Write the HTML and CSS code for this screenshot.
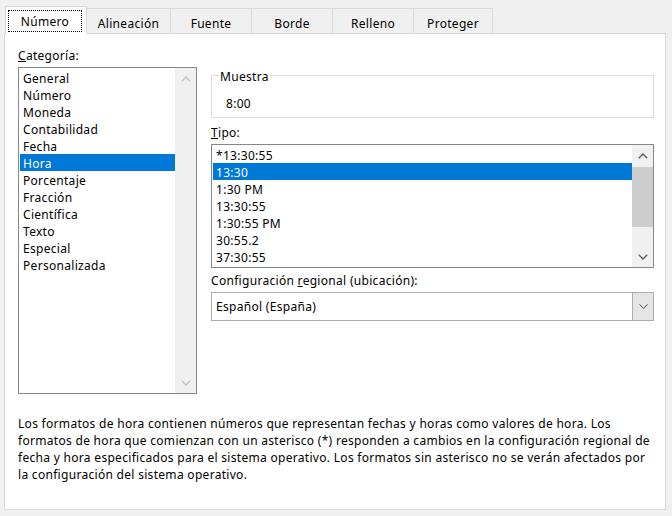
FILE: index.html
```html
<!DOCTYPE html>
<html lang="es">
<head>
<meta charset="utf-8">
<title>Formato de celdas</title>
<link rel="stylesheet" href="styles.css">
</head>
<body>
<div class="dialog">
  <div class="tabs">
    <div class="tab sel t-num"><span class="focus">Número</span></div>
    <div class="tab t-ali">Alineación</div>
    <div class="tab t-fue">Fuente</div>
    <div class="tab t-bor">Borde</div>
    <div class="tab t-rel">Relleno</div>
    <div class="tab t-pro">Proteger</div>
  </div>
  <div class="panel">
    <div class="main">
      <div class="left">
        <div class="label lbl-cat"><u>C</u>ategoría:</div>
        <div class="listbox cat">
          <div class="items">
            <div class="item">General</div>
            <div class="item">Número</div>
            <div class="item">Moneda</div>
            <div class="item">Contabilidad</div>
            <div class="item">Fecha</div>
            <div class="item selected">Hora</div>
            <div class="item">Porcentaje</div>
            <div class="item">Fracción</div>
            <div class="item">Científica</div>
            <div class="item">Texto</div>
            <div class="item">Especial</div>
            <div class="item">Personalizada</div>
          </div>
          <div class="vscroll disabled">
            <div class="sbtn"><svg width="10" height="6" viewBox="0 0 10 6"><path d="M0.8 5.2 L5 1 L9.2 5.2" fill="none" stroke="#c2c2c2" stroke-width="1.4"/></svg></div>
            <div class="track"></div>
            <div class="sbtn"><svg width="10" height="6" viewBox="0 0 10 6"><path d="M0.8 0.8 L5 5 L9.2 0.8" fill="none" stroke="#c2c2c2" stroke-width="1.4"/></svg></div>
          </div>
        </div>
      </div>
      <div class="right">
        <fieldset class="sample">
          <legend>Muestra</legend>
          <div class="sample-val">8:00</div>
        </fieldset>
        <div class="label lbl-tipo"><u>T</u>ipo:</div>
        <div class="listbox tipo">
          <div class="items">
            <div class="item">*13:30:55</div>
            <div class="item selected">13:30</div>
            <div class="item">1:30 PM</div>
            <div class="item">13:30:55</div>
            <div class="item">1:30:55 PM</div>
            <div class="item">30:55.2</div>
            <div class="item">37:30:55</div>
          </div>
          <div class="vscroll">
            <div class="sbtn"><svg width="10" height="6" viewBox="0 0 10 6"><path d="M0.8 5.2 L5 1 L9.2 5.2" fill="none" stroke="#606060" stroke-width="1.4"/></svg></div>
            <div class="thumb"></div>
            <div class="track"></div>
            <div class="sbtn"><svg width="10" height="6" viewBox="0 0 10 6"><path d="M0.8 0.8 L5 5 L9.2 0.8" fill="none" stroke="#606060" stroke-width="1.4"/></svg></div>
          </div>
        </div>
        <div class="label lbl-conf">Configuración <u>r</u>egional (ubicación):</div>
        <div class="combo">
          <span class="combo-text">Español (España)</span>
          <div class="combo-btn"><svg width="9" height="5" viewBox="0 0 9 5"><path d="M0.5 0.5 L4.5 4.3 L8.5 0.5" fill="none" stroke="#444" stroke-width="1"/></svg></div>
        </div>
      </div>
    </div>
    <p class="desc">Los formatos de hora contienen números que representan fechas y horas como valores de hora. Los<br>formatos de hora que comienzan con un asterisco (*) responden a cambios en la configuración regional de<br>fecha y hora especificados para el sistema operativo. Los formatos sin asterisco no se verán afectados por<br>la configuración del sistema operativo.</p>
  </div>
</div>
</body>
</html>
```

FILE: styles.css
```css
* { box-sizing: border-box; }
body {
  margin: 0;
  background: #f0f0f0;
  font-family: "Noto Sans", "Open Sans", sans-serif;
  font-size: 12px;
  letter-spacing: 0.3px;
  color: #000;
  width: 672px;
  height: 516px;
  overflow: hidden;
}
.tabs {
  display: flex;
  align-items: flex-end;
  height: 33px;
  padding: 6px 0 0 5px;
}
.tab {
  height: 25px;
  margin-left: -1px;
  border: 1px solid #d9d9d9;
  border-bottom: 0;
  background: #f0f0f0;
  display: flex;
  align-items: center;
  justify-content: center;
  padding-top: 4px;
  line-height: 17px;
  white-space: nowrap;
}
.tab.sel {
  height: 28px;
  margin-left: 0;
  margin-bottom: -1px;
  background: #fff;
  position: relative;
  z-index: 1;
  padding: 3px 4px 2px 2px;
  align-items: stretch;
}
.focus {
  flex: 1;
  border: 1px dotted #000;
  display: flex;
  align-items: center;
  justify-content: center;
  padding-top: 1px;
}
.t-num { width: 82px; }
.t-ali { width: 85px; }
.t-fue { width: 82px; }
.t-bor { width: 82px; }
.t-rel { width: 82px; }
.t-pro { width: 80px; }

.panel {
  margin-left: 4px;
  width: 662px;
  height: 477px;
  border: 1px solid #d9d9d9;
  background: #fff;
  padding: 12px 0 0 13px;
}
.main {
  display: grid;
  grid-template-columns: 179px 443px;
  column-gap: 14px;
  align-items: start;
}
.label {
  height: 17px;
  line-height: 17px;
  white-space: nowrap;
}
.lbl-cat { margin-bottom: 4px; line-height: 19px; }
.lbl-tipo { margin: 6px 0 3px; }
.lbl-conf { margin: 4px 0 3px; }

.listbox {
  display: flex;
  border: 1px solid #828790;
  background: #fff;
}
.cat { height: 327px; }
.tipo { height: 124px; }
.items {
  flex: 1;
  padding: 1px 0 0 1px;
  overflow: hidden;
}
.item {
  height: 17px;
  line-height: 19px;
  padding-left: 3px;
  white-space: nowrap;
}
.item.selected {
  background: #0078d7;
  color: #fff;
}
.vscroll {
  width: 21px;
  background: #f0f0f0;
  display: flex;
  flex-direction: column;
}
.sbtn {
  height: 21px;
  display: flex;
  align-items: center;
  justify-content: center;
}
.track { flex: 1; }
.thumb {
  height: 60px;
  margin-top: 1px;
  background: #cdcdcd;
}

.sample {
  margin: 21px 0 0;
  padding: 0 8px 5px 7px;
  border: 1px solid #dcdcdc;
  min-width: 0;
}
.sample legend {
  padding: 0 1px;
  height: 16px;
  line-height: 20px;
}
.sample-val {
  margin-top: 12px;
  line-height: 17px;
  padding-left: 7px;
}

.combo {
  height: 29px;
  display: flex;
  border: 1px solid #adadad;
  background: #fff;
}
.combo-text {
  flex: 1;
  padding-left: 4px;
  line-height: 27px;
}
.combo-btn {
  width: 21px;
  background: #e5e5e5;
  border-left: 1px solid #adadad;
  display: flex;
  align-items: center;
  justify-content: center;
}

.desc {
  margin: 21px 0 0;
  width: 645px;
  line-height: 17px;
  white-space: nowrap;
}
```
